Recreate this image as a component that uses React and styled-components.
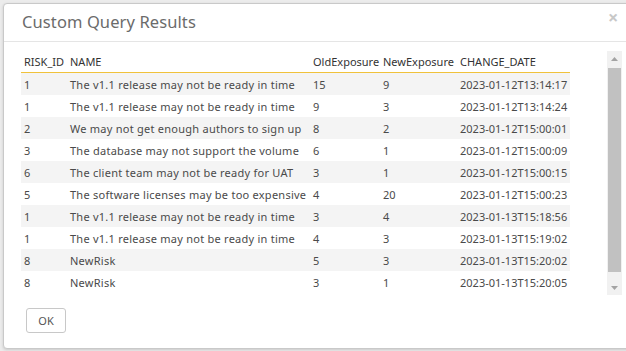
import React from "react";
import styled, { createGlobalStyle } from "styled-components";

const Global = createGlobalStyle`
  html, body { margin: 0; padding: 0; }
  body {
    background: #ececec;
    font-family: "Noto Sans", "Open Sans", sans-serif;
    overflow: hidden;
    width: 626px;
    height: 351px;
  }
`;

const Page = styled.div`
  padding: 3px 0 0 3px;
  height: 351px;
  box-sizing: border-box;
`;

const Modal = styled.div`
  width: 640px;
  height: 346px;
  box-sizing: border-box;
  background: #fff;
  border: 1px solid #c9c9c9;
  border-radius: 4px;
  display: flex;
  flex-direction: column;
  box-shadow: 0 1px 3px rgba(0,0,0,0.15);
`;

const Header = styled.div`
  height: 38px;
  box-sizing: border-box;
  border-bottom: 1px solid #e5e5e5;
  display: flex;
  align-items: center;
  padding: 0 0 2px 18px;
  position: relative;
`;

const Title = styled.h4`
  margin: 0;
  font-size: 16.5px;
  font-weight: 400;
  color: #6b6b6b;
  letter-spacing: 0.1px;
`;

const Close = styled.span`
  position: absolute;
  left: 604px;
  top: 4px;
  font-size: 18px;
  color: #c8c8c8;
  font-weight: 700;
  line-height: 18px;
`;

const Body = styled.div`
  padding: 9px 0 0 17px;
`;

const ScrollArea = styled.div`
  width: 601px;
  height: 244px;
  display: flex;
`;

const Viewport = styled.div`
  flex: 1;
  overflow: hidden;
`;

const ScrollBar = styled.div`
  width: 15px;
  background: #f1f1f1;
  display: flex;
  flex-direction: column;
`;

const Arrow = styled.div`
  height: 15px;
  display: flex;
  align-items: center;
  justify-content: center;
`;

const Track = styled.div`
  flex: 1;
  padding-top: 2px;
`;

const Thumb = styled.div`
  height: 204px;
  margin: 0 1px;
  background: #c1c1c1;
`;

const Table = styled.table`
  width: 549px;
  table-layout: fixed;
  border-collapse: collapse;
  font-size: 11px;
  color: #4a4a4a;
`;

const Th = styled.th`
  text-align: left;
  font-weight: 400;
  color: #333;
  height: 21px;
  padding: 0 0 0 3px;
  border-bottom: 1px solid #f0c23b;
  white-space: nowrap;
  overflow: hidden;
`;

const Tr = styled.tr`
  background: ${p => (p.$odd ? "#f4f4f4" : "#fff")};
`;

const Td = styled.td`
  height: 22px;
  padding: 0 0 0 3px;
  white-space: nowrap;
  overflow: hidden;
  letter-spacing: ${p => (p.$spaced ? "0.25px" : "0")};
`;

const Footer = styled.div`
  padding: 13px 0 0 22px;
`;

const Button = styled.button`
  width: 40px;
  height: 25px;
  border: 1px solid #c8c8c8;
  border-radius: 3px;
  background: #fff;
  font-family: inherit;
  font-size: 11px;
  color: #555;
  padding: 0;
`;

const widths = [46, 243, 70, 77, 113];
const cols = ["RISK_ID", "NAME", "OldExposure", "NewExposure", "CHANGE_DATE"];
const rows = [
  ["1", "The v1.1 release may not be ready in time", "15", "9", "2023-01-12T13:14:17"],
  ["1", "The v1.1 release may not be ready in time", "9", "3", "2023-01-12T13:14:24"],
  ["2", "We may not get enough authors to sign up", "8", "2", "2023-01-12T15:00:01"],
  ["3", "The database may not support the volume", "6", "1", "2023-01-12T15:00:09"],
  ["6", "The client team may not be ready for UAT", "3", "1", "2023-01-12T15:00:15"],
  ["5", "The software licenses may be too expensive", "4", "20", "2023-01-12T15:00:23"],
  ["1", "The v1.1 release may not be ready in time", "3", "4", "2023-01-13T15:18:56"],
  ["1", "The v1.1 release may not be ready in time", "4", "3", "2023-01-13T15:19:02"],
  ["8", "NewRisk", "5", "3", "2023-01-13T15:20:02"],
  ["8", "NewRisk", "3", "1", "2023-01-13T15:20:05"],
];

const Tri = ({ up }) => (
  <svg width="7" height="4" viewBox="0 0 7 4">
    <path d={up ? "M0 4 L3.5 0 L7 4 Z" : "M0 0 L3.5 4 L7 0 Z"} fill="#a3a3a3" />
  </svg>
);

export default function App() {
  return (
    <>
      <Global />
      <Page>
        <Modal>
          <Header>
            <Title>Custom Query Results</Title>
            <Close>×</Close>
          </Header>
          <Body>
            <ScrollArea>
              <Viewport>
                <Table>
                  <colgroup>
                    {widths.map((w, i) => <col key={i} style={{ width: w }} />)}
                  </colgroup>
                  <thead>
                    <tr>{cols.map(c => <Th key={c}>{c}</Th>)}</tr>
                  </thead>
                  <tbody>
                    {rows.map((r, i) => (
                      <Tr key={i} $odd={i % 2 === 0}>
                        {r.map((c, j) => <Td key={j} $spaced={j === 1}>{c}</Td>)}
                      </Tr>
                    ))}
                  </tbody>
                </Table>
              </Viewport>
              <ScrollBar>
                <Arrow><Tri up /></Arrow>
                <Track><Thumb /></Track>
                <Arrow><Tri /></Arrow>
              </ScrollBar>
            </ScrollArea>
          </Body>
          <Footer>
            <Button>OK</Button>
          </Footer>
        </Modal>
      </Page>
    </>
  );
}
